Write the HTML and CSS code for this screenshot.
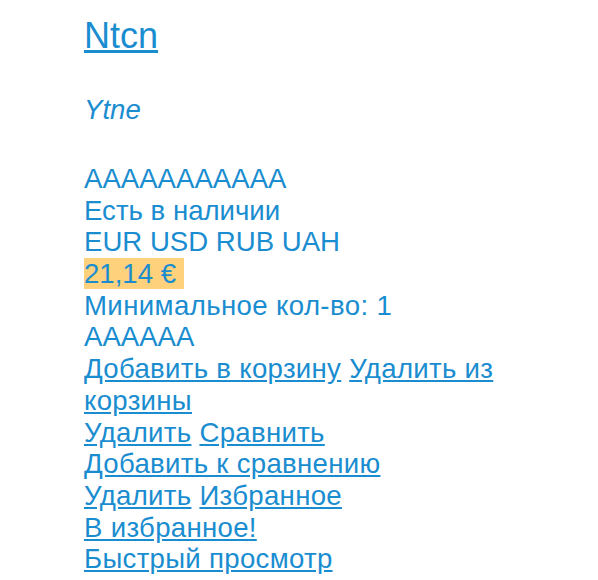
FILE: index.html
```html
<!DOCTYPE html>
<html lang="ru">
<head>
<meta charset="utf-8">
<title>Ntcn</title>
<link rel="stylesheet" href="styles.css">
</head>
<body>
<div class="page">
  <h1 class="title"><a href="#">Ntcn</a></h1>
  <p class="subtitle">Ytne</p>
  <div class="info">
    <div>ААААААААААА</div>
    <div>Есть в наличии</div>
    <div>EUR USD RUB UAH</div>
    <div><span class="price">21,14 €&nbsp;</span></div>
    <div class="wide">Минимальное кол-во: 1</div>
    <div>АААААА</div>
    <div class="actions">
      <div><a href="#">Добавить в корзину</a> <a href="#">Удалить из корзины</a></div>
      <div><a href="#">Удалить</a> <a href="#">Сравнить</a></div>
      <div><a href="#">Добавить к сравнению</a></div>
      <div><a href="#">Удалить</a> <a href="#">Избранное</a></div>
      <div><a href="#">В избранное!</a></div>
      <div><a href="#">Быстрый просмотр</a></div>
    </div>
  </div>
</div>
</body>
</html>
```
FILE: styles.css
```css
html, body {
  margin: 0;
  padding: 0;
  background: #ffffff;
}
body {
  font-family: "Liberation Sans", Arial, Helvetica, sans-serif;
  color: #1a8dd0;
}
a {
  color: #1a8dd0;
  text-decoration: underline;
}
.page {
  width: 430px;
  margin: 0 auto;
  padding-top: 14.5px;
}
.title {
  margin: 0 0 38.4px;
  font-size: 36px;
  line-height: 41px;
  font-weight: normal;
}
.subtitle {
  margin: 0 0 37.3px;
  font-size: 27.6px;
  line-height: 31.7px;
  font-style: italic;
}
.info {
  font-size: 27.6px;
  line-height: 31.7px;
}
.wide {
  letter-spacing: 0.38px;
}
.actions {
  letter-spacing: 0.3px;
}
.price {
  background: #fed17c;
}
```
